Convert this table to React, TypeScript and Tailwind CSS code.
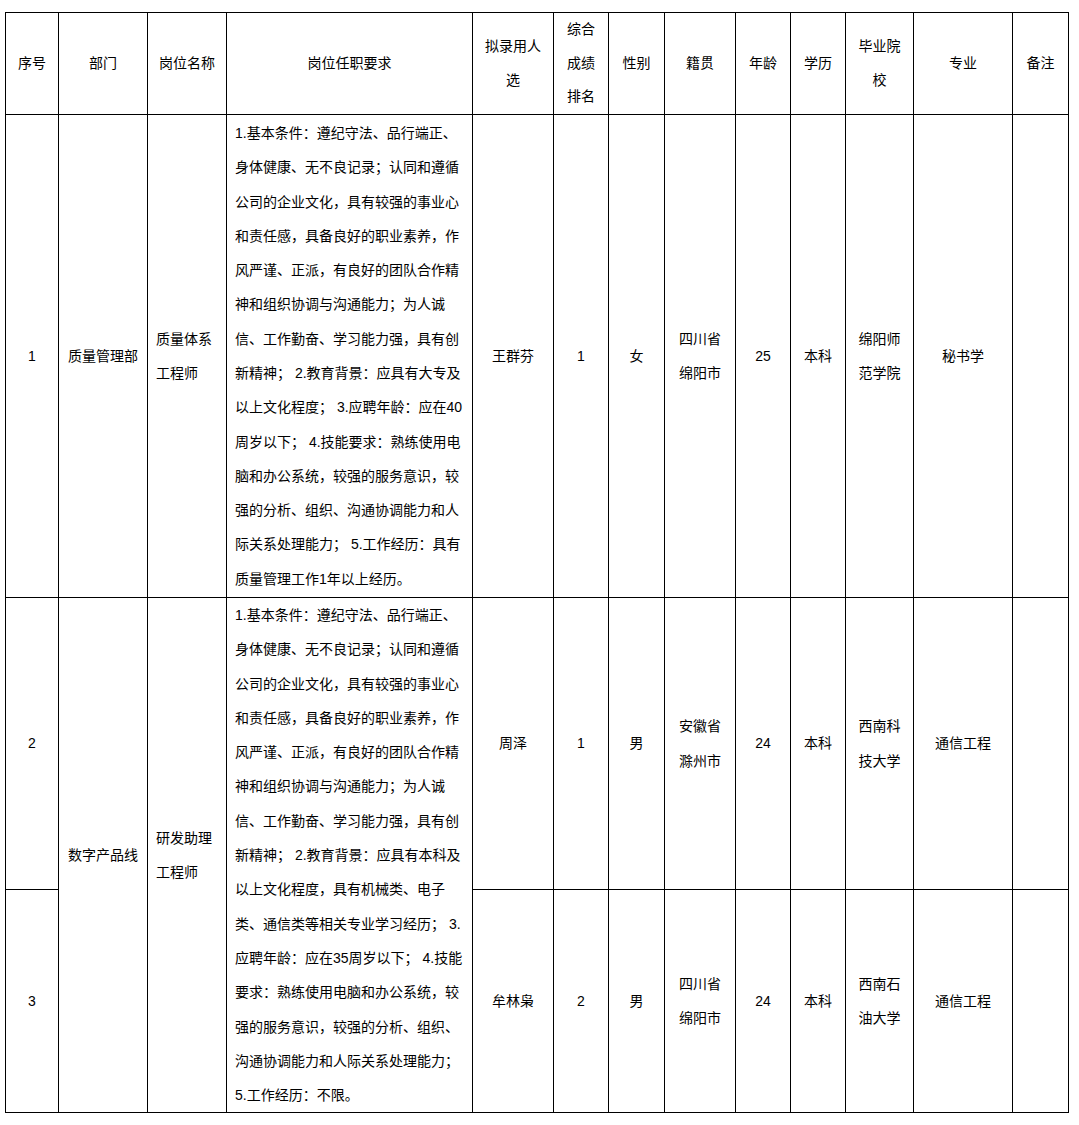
import React from "react";

const req1 = [
  "1.基本条件：遵纪守法、品行端正、",
  "身体健康、无不良记录；认同和遵循",
  "公司的企业文化，具有较强的事业心",
  "和责任感，具备良好的职业素养，作",
  "风严谨、正派，有良好的团队合作精",
  "神和组织协调与沟通能力；为人诚",
  "信、工作勤奋、学习能力强，具有创",
  "新精神； 2.教育背景：应具有大专及",
  "以上文化程度； 3.应聘年龄：应在40",
  "周岁以下； 4.技能要求：熟练使用电",
  "脑和办公系统，较强的服务意识，较",
  "强的分析、组织、沟通协调能力和人",
  "际关系处理能力； 5.工作经历：具有",
  "质量管理工作1年以上经历。",
];

const req2 = [
  "1.基本条件：遵纪守法、品行端正、",
  "身体健康、无不良记录；认同和遵循",
  "公司的企业文化，具有较强的事业心",
  "和责任感，具备良好的职业素养，作",
  "风严谨、正派，有良好的团队合作精",
  "神和组织协调与沟通能力；为人诚",
  "信、工作勤奋、学习能力强，具有创",
  "新精神； 2.教育背景：应具有本科及",
  "以上文化程度，具有机械类、电子",
  "类、通信类等相关专业学习经历； 3.",
  "应聘年龄：应在35周岁以下； 4.技能",
  "要求：熟练使用电脑和办公系统，较",
  "强的服务意识，较强的分析、组织、",
  "沟通协调能力和人际关系处理能力；",
  "5.工作经历：不限。",
];

function Lines({ lines, left }: { lines: string[]; left?: boolean }) {
  return (
    <div className={left ? "text-left" : "text-center"}>
      {lines.map((l, i) => (
        <div key={i} className="whitespace-nowrap">
          {l}
        </div>
      ))}
    </div>
  );
}

function Td({
  children,
  rowSpan,
  left,
}: {
  children?: React.ReactNode;
  rowSpan?: number;
  left?: boolean;
}) {
  return (
    <td
      rowSpan={rowSpan}
      className={`border border-black align-middle py-0 ${left ? "px-2 text-left" : "px-0 text-center"}`}
    >
      {children}
    </td>
  );
}

export default function App() {
  const widths = [53, 89, 79, 246, 81, 55, 56, 71, 55, 55, 68, 99, 56];
  return (
    <div className="min-h-[1125px] w-[1079px] bg-white pl-[5px] pt-[12px] text-[14px] leading-[34.3px] text-black font-['Liberation_Sans','Noto_Sans_CJK_SC',sans-serif]">
      <table className="w-[1063px] table-fixed border-collapse border border-black">
        <colgroup>
          {widths.map((w, i) => (
            <col key={i} style={{ width: w }} />
          ))}
        </colgroup>
        <tbody>
          <tr className="h-[102px] leading-[33.5px]">
            <Td>序号</Td>
            <Td>部门</Td>
            <Td>岗位名称</Td>
            <Td>岗位任职要求</Td>
            <Td>
              <Lines lines={["拟录用人", "选"]} />
            </Td>
            <Td>
              <Lines lines={["综合", "成绩", "排名"]} />
            </Td>
            <Td>性别</Td>
            <Td>籍贯</Td>
            <Td>年龄</Td>
            <Td>学历</Td>
            <Td>
              <Lines lines={["毕业院", "校"]} />
            </Td>
            <Td>专业</Td>
            <Td>备注</Td>
          </tr>
          <tr className="h-[483px]">
            <Td>1</Td>
            <Td>质量管理部</Td>
            <Td left>
              <Lines left lines={["质量体系", "工程师"]} />
            </Td>
            <Td left>
              <Lines left lines={req1} />
            </Td>
            <Td>王群芬</Td>
            <Td>1</Td>
            <Td>女</Td>
            <Td>
              <Lines lines={["四川省", "绵阳市"]} />
            </Td>
            <Td>25</Td>
            <Td>本科</Td>
            <Td>
              <Lines lines={["绵阳师", "范学院"]} />
            </Td>
            <Td>秘书学</Td>
            <Td />
          </tr>
          <tr className="h-[292px]">
            <Td>2</Td>
            <Td rowSpan={2}>数字产品线</Td>
            <Td rowSpan={2} left>
              <Lines left lines={["研发助理", "工程师"]} />
            </Td>
            <Td rowSpan={2} left>
              <Lines left lines={req2} />
            </Td>
            <Td>周泽</Td>
            <Td>1</Td>
            <Td>男</Td>
            <Td>
              <Lines lines={["安徽省", "滁州市"]} />
            </Td>
            <Td>24</Td>
            <Td>本科</Td>
            <Td>
              <Lines lines={["西南科", "技大学"]} />
            </Td>
            <Td>通信工程</Td>
            <Td />
          </tr>
          <tr className="h-[223px]">
            <Td>3</Td>
            <Td>牟林枭</Td>
            <Td>2</Td>
            <Td>男</Td>
            <Td>
              <Lines lines={["四川省", "绵阳市"]} />
            </Td>
            <Td>24</Td>
            <Td>本科</Td>
            <Td>
              <Lines lines={["西南石", "油大学"]} />
            </Td>
            <Td>通信工程</Td>
            <Td />
          </tr>
        </tbody>
      </table>
    </div>
  );
}
